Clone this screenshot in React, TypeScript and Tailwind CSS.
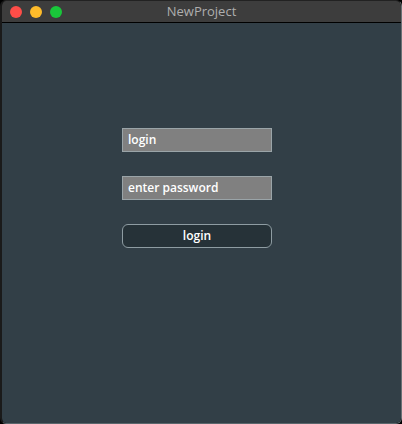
export default function App() {
  return (
    <div
      className="w-[402px] h-[424px] bg-black flex"
      style={{ fontFamily: '"Open Sans", "Liberation Sans", sans-serif' }}
    >
      <div className="flex-1 flex flex-col rounded-[6px] overflow-hidden border-l-2 border-l-[#1a1a1a] border-r border-r-[#6a7175] border-b border-b-[#5a666c] border-t border-t-[#222]">
        <div className="h-[22px] bg-[#3d3d3d] border-b border-black flex items-center relative">
          <div className="flex items-center gap-[8px] pl-[8px]">
            <span className="w-[12px] h-[12px] rounded-full bg-[#fe4d48]" />
            <span className="w-[12px] h-[12px] rounded-full bg-[#febb2a]" />
            <span className="w-[12px] h-[12px] rounded-full bg-[#19c73a]" />
          </div>
          <div className="absolute inset-0 flex items-center justify-center text-[13px] text-[#aeaeae]">
            NewProject
          </div>
        </div>
        <div className="flex-1 bg-[#323f47] flex flex-col items-start pt-[105px] pl-[120px]">
          <div className="w-[150px] h-[24px] bg-[#808080] border border-[#9aa4a8] flex items-center px-[5px] text-[12px] font-semibold text-white">
            login
          </div>
          <div className="w-[150px] h-[24px] mt-[24px] bg-[#808080] border border-[#9aa4a8] flex items-center px-[5px] text-[12px] font-semibold text-white">
            enter password
          </div>
          <button className="w-[150px] h-[24px] mt-[24px] bg-[#263238] border border-[#8e9ca2] rounded-[6px] flex items-center justify-center text-[12px] font-semibold text-white">
            login
          </button>
        </div>
      </div>
    </div>
  );
}
